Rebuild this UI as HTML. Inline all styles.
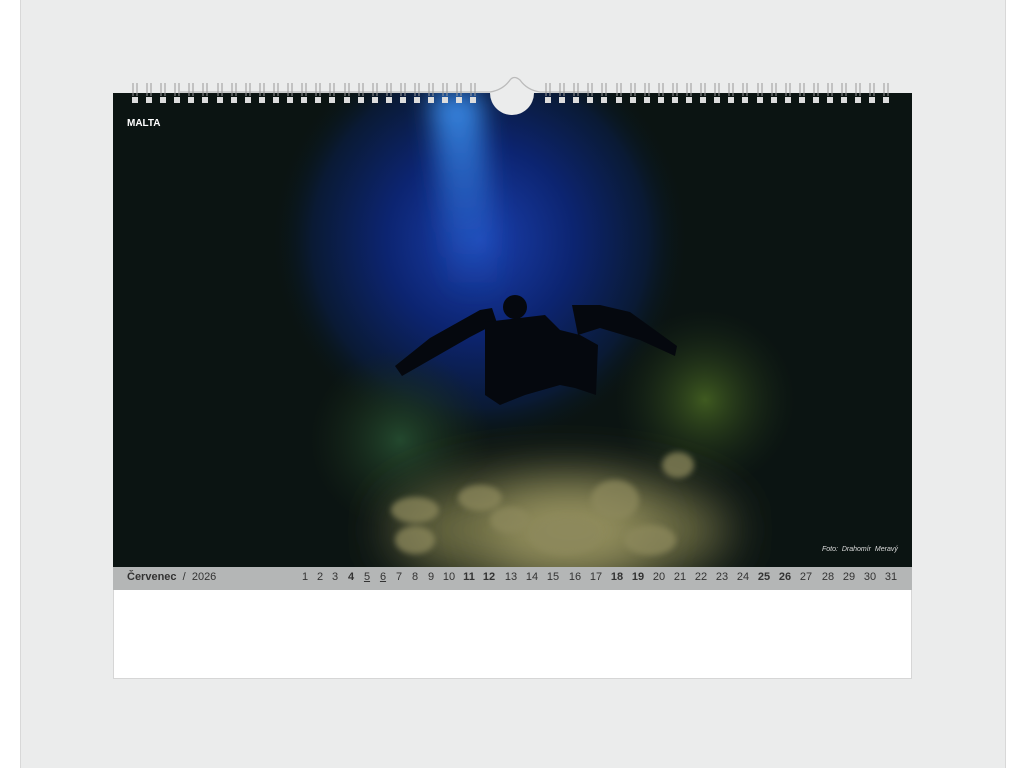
<!DOCTYPE html>
<html><head><meta charset="utf-8"><style>
html,body{margin:0;padding:0;width:1024px;height:768px;overflow:hidden;background:#fff;font-family:"Liberation Sans",sans-serif}
.bg{position:absolute;left:20px;top:0;width:984px;height:768px;background:#ebecec;border-left:1px solid #d8d8d8;border-right:1px solid #d8d8d8}
.cal{position:absolute;left:113px;top:93px;width:799px;height:586px;background:#fff;border:1px solid #d6d6d6;box-sizing:border-box}
.photo{position:absolute;left:113px;top:93px;width:799px;height:474px;overflow:hidden;background:#0b1512}
.bar{position:absolute;left:113px;top:567px;width:799px;height:23px;background:#b4b6b6}
.month{position:absolute;left:14px;top:4px;font-size:11px;color:#333}
.malta{position:absolute;left:127px;top:118px;color:#fff;font-size:10px;font-weight:bold}
.foto{position:absolute;left:822px;top:546px;color:#ddd;font-size:7px;font-style:italic}
</style></head><body>
<div class="bg"></div>
<div class="cal"></div>
<div class="photo">
<svg width="799" height="474" viewBox="113 93 799 474">
<defs>
<radialGradient id="g1" cx="480" cy="240" r="210" gradientUnits="userSpaceOnUse">
<stop offset="0" stop-color="#1a3fae"/><stop offset="0.45" stop-color="#0c2470"/><stop offset="0.8" stop-color="#0a1a34"/><stop offset="1" stop-color="#0a1512" stop-opacity="0"/></radialGradient>
<linearGradient id="beam" x1="0" y1="0" x2="0" y2="1"><stop offset="0" stop-color="#3a8ce8"/><stop offset="1" stop-color="#2a6cd8" stop-opacity="0"/></linearGradient>
<radialGradient id="gr" cx="705" cy="400" r="90" gradientUnits="userSpaceOnUse"><stop offset="0" stop-color="#3f5a20"/><stop offset="1" stop-color="#1a2a18" stop-opacity="0"/></radialGradient>
<radialGradient id="gl" cx="400" cy="440" r="90" gradientUnits="userSpaceOnUse"><stop offset="0" stop-color="#23482e"/><stop offset="1" stop-color="#1a2a18" stop-opacity="0"/></radialGradient>
<filter id="bl" x="-100%" y="-50%" width="300%" height="200%"><feGaussianBlur stdDeviation="12"/></filter>
<filter id="b3" x="-50%" y="-100%" width="200%" height="300%"><feGaussianBlur stdDeviation="25"/></filter>
<filter id="b2" x="-20%" y="-50%" width="140%" height="200%"><feGaussianBlur stdDeviation="3"/></filter>
</defs>
<rect x="113" y="93" width="799" height="474" fill="#0b1412"/>
<rect x="113" y="93" width="799" height="474" fill="url(#g1)"/>
<rect x="113" y="93" width="799" height="474" fill="url(#gr)"/>
<rect x="113" y="93" width="799" height="474" fill="url(#gl)"/>
<polygon points="430,93 480,93 500,300 450,300" fill="url(#beam)" filter="url(#bl)"/>
<ellipse cx="560" cy="530" rx="170" ry="55" fill="#6a6a42" filter="url(#b3)"/>
<ellipse cx="570" cy="530" rx="80" ry="35" fill="#9a9462" filter="url(#b3)"/>
<g fill="#8c885c" opacity="0.75" filter="url(#b2)">
<ellipse cx="415" cy="510" rx="24" ry="13"/><ellipse cx="415" cy="540" rx="20" ry="14"/>
<ellipse cx="480" cy="498" rx="22" ry="13"/><ellipse cx="510" cy="520" rx="20" ry="13"/>
<ellipse cx="615" cy="500" rx="24" ry="20"/><ellipse cx="565" cy="535" rx="36" ry="20"/>
<ellipse cx="678" cy="465" rx="16" ry="13"/><ellipse cx="650" cy="540" rx="26" ry="15"/>
</g>
<g fill="#05080e">
<circle cx="515" cy="307" r="12"/>
<polygon points="395,366 402,376 470,337 497,323 492,308 480,310 430,338"/>
<polygon points="485,322 545,315 560,330 580,335 598,345 596,395 575,388 560,385 525,395 500,405 485,395"/>
<polygon points="572,305 578,335 600,328 640,340 675,356 677,346 630,312 600,305"/>
</g>
</svg>
</div>
<div class="malta">MALTA</div>
<div class="foto">Foto:&nbsp; Drahomír&nbsp; Meravý</div>
<div class="bar"><div class="month"><b>Červenec</b> &nbsp;/&nbsp; 2026</div></div>
<div id="days"></div>
<svg style="position:absolute;left:0;top:0" width="1024" height="120">
<path d="M180 92 H490 Q503 90 510 80 Q514 75 520 80 Q527 90 540 92 H590" stroke="#bbb" stroke-width="1.3" fill="none"/>
<path d="M490 93 A22 22 0 0 0 534 93 Z" fill="#ebecec"/>
<g id="rings"></g>
</svg>
<script>
var xs=[305,320,335,351,367,383,399,415,431,449,469,489,511,532,553,575,596,617,638,659,680,701,722,743,764,785,806,828,849,870,891];
var bold=[4,11,12,18,19,25,26],u=[5,6];var h='';
xs.forEach(function(x,i){var d=i+1;var s='left:'+x+'px;top:571px;position:absolute;transform:translateX(-50%);font-size:11px;color:#333;font-family:Liberation Sans,sans-serif;'+(bold.indexOf(d)>=0?'font-weight:bold;':'')+(u.indexOf(d)>=0?'text-decoration:underline;':'');h+='<span style="'+s+'">'+d+'</span>';});
document.getElementById('days').innerHTML=h;
var r='';function ring(x){r+='<line x1="'+(x-2)+'" y1="83" x2="'+(x-2)+'" y2="96" stroke="#999" stroke-width="1"/><line x1="'+(x+2)+'" y1="83" x2="'+(x+2)+'" y2="96" stroke="#999" stroke-width="1"/><rect x="'+(x-3)+'" y="97" width="6" height="6" fill="#ddd"/>';}
for(var x=135;x<=480;x+=14.1)ring(Math.round(x));for(var x=548;x<=890;x+=14.1)ring(Math.round(x));
document.getElementById('rings').innerHTML=r;
</script>
</body></html>
